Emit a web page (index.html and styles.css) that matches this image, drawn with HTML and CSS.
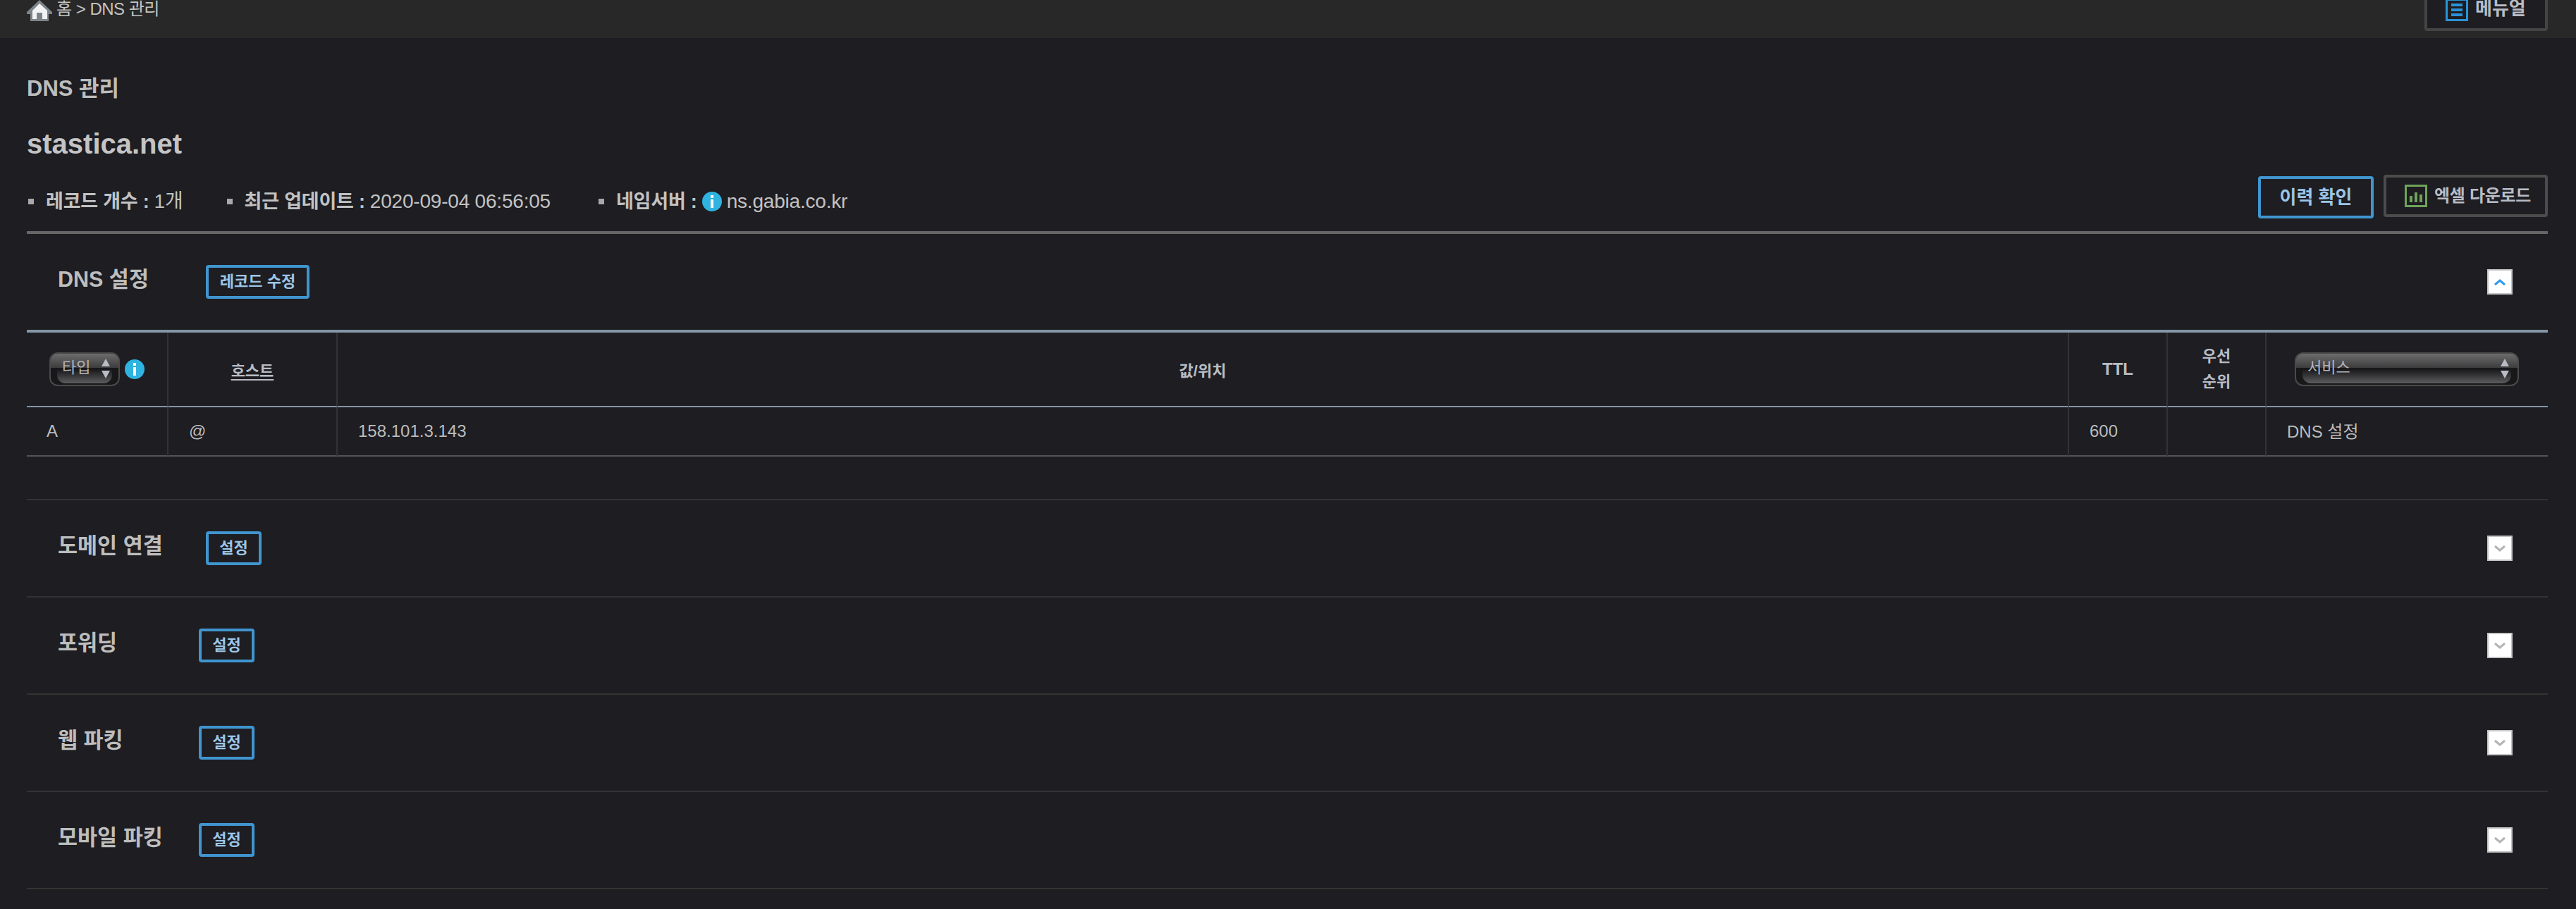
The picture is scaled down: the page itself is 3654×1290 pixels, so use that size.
FILE: index.html
```html
<!DOCTYPE html>
<html lang="ko">
<head>
<meta charset="utf-8">
<title>DNS 관리</title>
<link rel="stylesheet" href="styles.css">
</head>
<body>
<header class="topbar">
  <nav class="crumb">
    <svg class="home" viewBox="0 0 36 30" width="36" height="30"><path d="M18 0 L36 17 V20 H31 V30 H5 V20 H0 V17 Z" fill="#7d8489"/><path d="M18 5 L29 15 V27 H22 V18 H14 V27 H8 V15 Z" fill="#f2f3f4"/></svg>
    <span>홈 &gt; DNS 관리</span>
  </nav>
  <a class="manual">
    <svg viewBox="0 0 32 32" width="32" height="32"><rect x="1.5" y="1.5" width="29" height="29" fill="none" stroke="#2a93d8" stroke-width="3"/><path d="M8 9h16M8 16h16M8 23h16" stroke="#2a93d8" stroke-width="4"/></svg>
    <span>메뉴얼</span>
  </a>
</header>
<main class="page">
  <h2 class="crumb-title">DNS 관리</h2>
  <h1 class="domain">stastica.net</h1>
  <div class="summary">
    <ul class="facts">
      <li class="fact"><b>레코드 개수 :</b> 1개</li>
      <li class="fact"><b>최근 업데이트 :</b> 2020-09-04 06:56:05</li>
      <li class="fact"><b>네임서버 :</b>
        <svg class="info" viewBox="0 0 28 28" width="28" height="28"><circle cx="14" cy="14" r="14" fill="#2fb3e0"/><rect x="12" y="5" width="4" height="4" fill="#fff"/><rect x="12" y="11" width="4" height="12" fill="#fff"/></svg>
        ns.gabia.co.kr</li>
    </ul>
    <div class="actions">
      <a class="btn-history">이력 확인</a>
      <a class="btn-excel">
        <svg viewBox="0 0 32 32" width="32" height="32"><rect x="1.5" y="1.5" width="29" height="29" fill="none" stroke="#6fa35a" stroke-width="3"/><path d="M9 16v9M16 11v14M23 14v11" stroke="#6fa35a" stroke-width="4"/></svg>
        <span>엑셀 다운로드</span>
      </a>
    </div>
  </div>

  <section class="open">
    <div class="head">
      <h3 class="title wide">DNS 설정</h3>
      <a class="tag tag-long">레코드 수정</a>
      <span class="toggle"><svg viewBox="0 0 36 36" width="36" height="36"><path d="M11 22l7-6 7 6" fill="none" stroke="#2f9be8" stroke-width="3"/></svg></span>
    </div>
    <table class="records">
      <colgroup><col class="c1"><col class="c2"><col><col class="c4"><col class="c5"><col class="c6"></colgroup>
      <thead>
        <tr>
          <th><div class="type-cell"><div class="sel sel-type"><span>타입</span><svg viewBox="0 0 12 28" width="12" height="28"><path d="M6 0l6 11H0zM6 28L0 17h12z" fill="#b9bcc4"/></svg></div>
            <svg class="info" viewBox="0 0 28 28" width="28" height="28"><circle cx="14" cy="14" r="14" fill="#2fb3e0"/><rect x="12" y="5" width="4" height="4" fill="#fff"/><rect x="12" y="11" width="4" height="12" fill="#fff"/></svg></div></th>
          <th class="small"><u>호스트</u></th>
          <th class="small">값/위치</th>
          <th>TTL</th>
          <th class="small stack">우선<br>순위</th>
          <th><div class="sel sel-service"><span>서비스</span><svg viewBox="0 0 12 28" width="12" height="28"><path d="M6 0l6 11H0zM6 28L0 17h12z" fill="#b9bcc4"/></svg></div></th>
        </tr>
      </thead>
      <tbody>
        <tr><td class="p1">A</td><td>@</td><td>158.101.3.143</td><td>600</td><td></td><td class="svc">DNS 설정</td></tr>
      </tbody>
    </table>
  </section>

  <section class="row">
    <div class="head">
      <h3 class="title wide">도메인 연결</h3>
      <a class="tag">설정</a>
      <span class="toggle"><svg viewBox="0 0 36 36" width="36" height="36"><path d="M11 15l7 6 7-6" fill="none" stroke="#b4b4b4" stroke-width="3"/></svg></span>
    </div>
  </section>
  <section class="row">
    <div class="head">
      <h3 class="title">포워딩</h3>
      <a class="tag">설정</a>
      <span class="toggle"><svg viewBox="0 0 36 36" width="36" height="36"><path d="M11 15l7 6 7-6" fill="none" stroke="#b4b4b4" stroke-width="3"/></svg></span>
    </div>
  </section>
  <section class="row">
    <div class="head">
      <h3 class="title">웹 파킹</h3>
      <a class="tag">설정</a>
      <span class="toggle"><svg viewBox="0 0 36 36" width="36" height="36"><path d="M11 15l7 6 7-6" fill="none" stroke="#b4b4b4" stroke-width="3"/></svg></span>
    </div>
  </section>
  <section class="row">
    <div class="head">
      <h3 class="title">모바일 파킹</h3>
      <a class="tag">설정</a>
      <span class="toggle"><svg viewBox="0 0 36 36" width="36" height="36"><path d="M11 15l7 6 7-6" fill="none" stroke="#b4b4b4" stroke-width="3"/></svg></span>
    </div>
  </section>
</main>
</body>
</html>
```
FILE: styles.css
```css
* { box-sizing: border-box; }
html, body { margin: 0; padding: 0; }
body {
  width: 3654px;
  height: 1290px;
  overflow: hidden;
  background: #1d1d22;
  color: #c2c2c2;
  font-family: "Liberation Sans", "Noto Sans CJK KR", sans-serif;
  font-size: 24px;
}
h1, h2, h3, ul { margin: 0; padding: 0; list-style: none; }

.topbar {
  height: 54px;
  background: #282828;
  display: flex;
  justify-content: space-between;
  align-items: flex-end;
  padding: 0 40px 0 38px;
  overflow: hidden;
}
.crumb {
  align-self: flex-start;
  display: flex;
  gap: 6px;
  line-height: 26px;
  font-size: 24px;
  letter-spacing: -0.5px;
  color: #c4c4c4;
}
.home { display: block; }
.manual {
  flex: none;
  width: 175px;
  height: 64px;
  margin-bottom: 10px;
  border: 4px solid #444;
  border-radius: 4px;
  background: #1d1d22;
  display: flex;
  align-items: flex-end;
  gap: 10px;
  padding: 0 0 10px 26px;
  font-size: 26px;
  font-weight: bold;
  color: #b9bcc4;
  line-height: 26px;
}
.manual span { position: relative; top: -5px; }

.page { padding: 0 40px 0 38px; }
.crumb-title {
  margin-top: 52px;
  font-size: 31px;
  line-height: 40px;
  color: #bdbdbd;
}
.domain {
  margin-top: 38px;
  font-size: 40px;
  line-height: 40px;
  color: #c4c4c4;
}
.summary {
  margin-top: 24px;
  height: 80px;
  display: flex;
  justify-content: space-between;
  align-items: flex-start;
}
.facts {
  display: flex;
  margin-top: 20px;
  font-size: 28px;
  line-height: 36px;
  letter-spacing: -0.2px;
}
.facts b { font-size: 27px; }
.fact {
  display: flex;
  align-items: center;
  gap: 7px;
  padding-left: 27px;
  position: relative;
  margin-right: 60px;
}
.fact:nth-child(2) { margin-right: 66px; }
.fact::before {
  content: "";
  position: absolute;
  left: 2px;
  top: 14px;
  width: 8px;
  height: 8px;
  background: #a8a8a8;
}
.actions { display: flex; gap: 14px; }
.btn-history {
  width: 164px;
  height: 60px;
  margin-top: 2px;
  border: 4px solid #4095cf;
  border-radius: 4px;
  display: flex;
  align-items: center;
  justify-content: center;
  font-size: 26px;
  font-weight: bold;
  color: #9cc5e5;
  padding-bottom: 6px;
}
.btn-excel {
  width: 233px;
  height: 60px;
  border: 4px solid #4c4c4c;
  border-radius: 4px;
  display: flex;
  align-items: center;
  gap: 10px;
  padding: 0 0 0 26px;
  font-size: 24px;
  font-weight: bold;
  color: #b9bcc4;
}
.btn-excel span { padding-bottom: 6px; letter-spacing: -0.3px; }

.open {
  border-top: 4px solid #666;
  border-bottom: 2px solid #333;
  height: 382px;
}
.row { height: 138px; border-bottom: 2px solid #333; }
.head {
  height: 136px;
  display: flex;
  align-items: center;
  padding-left: 44px;
  position: relative;
}
.title {
  width: 200px;
  font-size: 30.5px;
  line-height: 40px;
  padding-bottom: 8px;
  height: 48px;
  color: #bdbdbd;
  flex: none;
}
.title.wide { width: 210px; }
.tag {
  width: 79px;
  height: 48px;
  padding-bottom: 6px;
  border: 4px solid #4095cf;
  border-radius: 4px;
  display: flex;
  align-items: center;
  justify-content: center;
  font-size: 22px;
  font-weight: bold;
  color: #9cc5e5;
}
.tag-long { width: 147px; }
.toggle {
  width: 36px;
  height: 36px;
  margin-left: auto;
  margin-right: 50px;
  background: #fff;
  box-shadow: inset 0 0 0 2px #c4c4c4;
  display: block;
}
.toggle svg { display: block; }

.records {
  width: 100%;
  table-layout: fixed;
  border-collapse: separate;
  border-spacing: 0;
  border-top: 4px solid #8296a6;
}
.c1 { width: 201px; }
.c2 { width: 240px; }
.c4, .c5 { width: 140px; }
.c6 { width: 399px; }
.records th, .records td {
  border-right: 2px solid #333;
  padding: 0;
}
.records th:last-child, .records td:last-child { border-right: 0; }
.records th {
  height: 106px;
  border-bottom: 2px solid #8296a6;
  color: #b9bcc4;
  font-size: 24px;
  font-weight: bold;
  text-align: center;
}
.records th.small { font-size: 22px; }
.records th.stack { line-height: 36px; }
.records u { text-underline-offset: 4px; }
.records td {
  height: 70px;
  border-bottom: 2px solid #555;
  padding-left: 29px;
  font-size: 24px;
  color: #bcbcbc;
}
.records td.p1 { padding-left: 28px; }
.records td.svc { padding-bottom: 4px; }

.type-cell {
  display: flex;
  align-items: center;
  gap: 7px;
  padding-left: 32px;
}
.sel {
  position: relative;
  height: 48px;
  border: 2px solid #4a4a4a;
  border-radius: 12px;
  background: linear-gradient(#6c6c6c 0, #3c3c3e 46%, #18181b 46%, #18181b 100%);
  display: flex;
  align-items: center;
  justify-content: space-between;
  font-weight: normal;
  font-size: 22px;
  color: #b4b4b8;
  text-align: left;
}
.sel::before {
  content: "";
  position: absolute;
  left: 9px;
  right: 9px;
  top: 22px;
  bottom: 2px;
  border-radius: 0 0 12px 12px;
  background: linear-gradient(#18181b, #5c5c5e);
}
.sel span, .sel svg { position: relative; }
.sel span { top: -5px; padding-left: 16px; }
.sel svg { margin-right: 12px; top: -1px; }
.sel-type { width: 100px; flex: none; }
.sel-service { width: 318px; margin-left: 40px; }
```
